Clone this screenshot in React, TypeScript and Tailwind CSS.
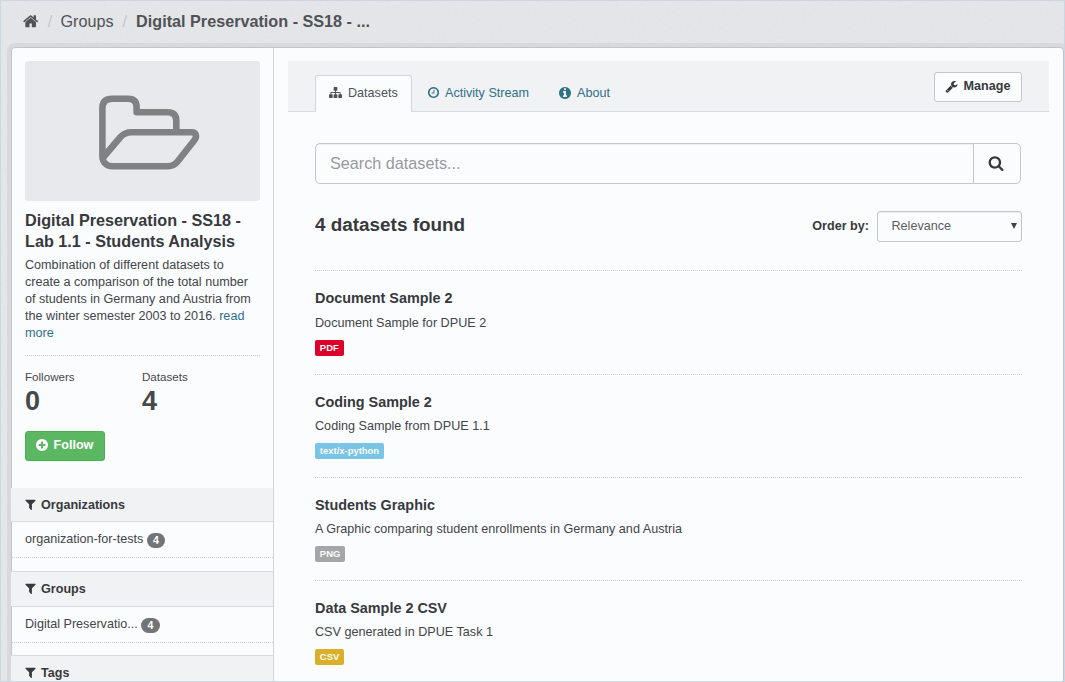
import React from "react";

const disc =
  "M1664 896q0 209-103 385.5t-279.5 279.5-385.5 103-385.5-103-279.5-279.5-103-385.5 103-385.5 279.5-279.5 385.5-103 385.5 103 279.5 279.5 103 385.5z";

const icons = {
  home: "M1408 992v480q0 26-19 45t-45 19h-384v-384h-256v384h-384q-26 0-45-19t-19-45v-480q0-1 .5-3t.5-3l575-474 575 474q1 2 1 6zm223-69l-62 74q-8 9-21 11h-3q-13 0-21-7l-692-577-692 577q-12 8-24 7-13-2-21-11l-62-74q-8-10-7-23.5t11-21.5l719-599q32-26 76-26t76 26l244 204v-195q0-14 9-23t23-9h192q14 0 23 9t9 23v408l219 182q10 8 11 21.5t-7 23.5z",
  search:
    "M1216 832q0-185-131.5-316.5t-316.5-131.5-316.5 131.5-131.5 316.5 131.5 316.5 316.5 131.5 316.5-131.5 131.5-316.5zm512 832q0 52-38 90t-90 38q-54 0-90-38l-343-342q-179 124-399 124-143 0-273.5-55.5t-225-150-150-225-55.5-273.5 55.5-273.5 150-225 225-150 273.5-55.5 273.5 55.5 225 150 150 225 55.5 273.5q0 220-124 399l343 343q37 37 37 90z",
  plus:
    "M1344 960v-128q0-26-19-45t-45-19h-256v-256q0-26-19-45t-45-19h-128q-26 0-45 19t-19 45v256h-256q-26 0-45 19t-19 45v128q0 26 19 45t45 19h256v256q0 26 19 45t45 19h128q26 0 45-19t19-45v-256h256q26 0 45-19t19-45z" + disc,
  filter:
    "M1595 295q17 41-14 70l-493 493v742q0 42-39 59-13 5-25 5-27 0-45-19l-256-256q-19-19-19-45v-486l-493-493q-31-29-14-70 17-39 59-39h1280q42 0 59 39z",
  wrench:
    "M448 1472q0-26-19-45t-45-19-45 19-19 45 19 45 45 19 45-19 19-45zm644-420l-682 682q-37 37-90 37-52 0-91-37l-106-108q-38-36-38-90 0-53 38-91l681-681q39 98 114.5 173.5t173.5 114.5zm634-435q0 39-23 106-47 134-164.5 217.5t-258.5 83.5q-185 0-316.5-131.5t-131.5-316.5 131.5-316.5 316.5-131.5q58 0 121.5 16.5t107.5 46.5q16 11 16 28t-16 28l-293 169v224l193 107q5-3 79-48.5t135.5-81 70.5-35.5q15 0 23.5 10t8.5 25z",
  clock:
    "M1024 544v448q0 14-9 23t-23 9h-320q-14 0-23-9t-9-23v-64q0-14 9-23t23-9h224v-352q0-14 9-23t23-9h64q14 0 23 9t9 23zm416 352q0-148-73-273t-198-198-273-73-273 73-198 198-73 273 73 273 198 198 273 73 273-73 198-198 73-273z" + disc,
  info:
    "M1152 1376v-160q0-14-9-23t-23-9h-96v-512q0-14-9-23t-23-9h-320q-14 0-23 9t-9 23v160q0 14 9 23t23 9h96v320h-96q-14 0-23 9t-9 23v160q0 14 9 23t23 9h448q14 0 23-9t9-23zm-128-896v-160q0-14-9-23t-23-9h-192q-14 0-23 9t-9 23v160q0 14 9 23t23 9h192q14 0 23-9t9-23z" + disc,
  sitemap:
    "M1792 1248v320q0 40-28 68t-68 28h-320q-40 0-68-28t-28-68v-320q0-40 28-68t68-28h96v-192h-512v192h96q40 0 68 28t28 68v320q0 40-28 68t-68 28h-320q-40 0-68-28t-28-68v-320q0-40 28-68t68-28h96v-192h-512v192h96q40 0 68 28t28 68v320q0 40-28 68t-68 28h-320q-40 0-68-28t-28-68v-320q0-40 28-68t68-28h96v-192q0-52 38-90t90-38h512v-192h-96q-40 0-68-28t-28-68v-320q0-40 28-68t68-28h320q40 0 68 28t28 68v320q0 40-28 68t-68 28h-96v192h512q52 0 90 38t38 90v192h96q40 0 68 28t28 68z",
};

function Icon({ name, className }: { name: keyof typeof icons; className: string }) {
  return (
    <svg viewBox="0 0 1792 1792" fill="currentColor" fillRule="evenodd" className={`shrink-0 ${className}`}>
      <path d={icons[name]} />
    </svg>
  );
}

function Facet({ title, className, children }: { title: string; className: string; children?: React.ReactNode }) {
  return (
    <section>
      <h2 className={`-ml-px flex items-center border-b border-[#d8dadd] bg-[#f1f2f4] pl-[12.500px] text-[12.6px] font-bold text-[#37393c] ${className}`}>
        <Icon name="filter" className="mr-[4.500px] mb-[2px] size-[13px]" />
        {title}
      </h2>
      {children}
    </section>
  );
}

function FacetItem({ label, count }: { label: string; count: number }) {
  return (
    <div className="flex h-9 items-center border-b border-dotted border-[#d0d2d5] pl-[13px] text-[12.6px]">
      <span>{label}</span>
      <span className="mt-[2px] ml-[3.5px] flex h-[15px] w-[18.5px] items-center justify-center rounded-full bg-[#737477] text-[10.6px] font-bold text-white">
        {count}
      </span>
    </div>
  );
}

const datasets = [
  { title: "Document Sample 2", text: "Document Sample for DPUE 2", tag: "PDF", color: "bg-[#dd0029]", height: "h-[104px]", gap: "mt-[5px]" },
  { title: "Coding Sample 2", text: "Coding Sample from DPUE 1.1", tag: "text/x-python", color: "bg-[#79c5e8]", height: "h-[103px]", gap: "mt-1" },
  { title: "Students Graphic", text: "A Graphic comparing student enrollments in Germany and Austria", tag: "PNG", color: "bg-[#a5a6a8]", height: "h-[103px]", gap: "mt-1" },
  { title: "Data Sample 2 CSV", text: "CSV generated in DPUE Task 1", tag: "CSV", color: "bg-[#dab02b]", height: "h-[103px]", gap: "mt-1" },
];

function Sidebar() {
  return (
    <aside className="w-[262px] shrink-0 border-r border-[#d3d4d7]">
      <div className="h-[440px] px-[13px] pt-[13px]">
        <div className="flex h-[140px] w-[235px] items-center justify-center rounded-[3px] bg-[#e8e9ec]">
          <svg viewBox="0 0 235 140" className="h-[140px] w-[235px]" fill="none" stroke="#808183" strokeWidth="6.6" strokeLinejoin="round">
            <path d="M77.400 95V47.500q0-9.700 9.700-9.700h16q8.500 0 8.500 8.500v5h31q8.700 0 8.700 8.700v11.300" />
            <path d="M78.500 96l17-20q4.500-4.700 11-4.700h60.500c4 0 5.200 4.200 2.500 7.700l-16.500 21q-4 5.200-10 5.200h-55.900c-5.800 0-9.700-4.200-9.700-10.200" />
          </svg>
        </div>
        <h1 className="mt-[9px] text-[16.200px] leading-[21px] font-bold whitespace-nowrap text-[#37393c]">
          Digital Preservation - SS18 -<br />Lab 1.1 - Students Analysis
        </h1>
        <p className="mt-[5px] text-[12.62px] leading-[17px] whitespace-nowrap">
          Combination of different datasets to<br />create a comparison of the total number<br />of students in Germany and Austria from<br />
          the winter semester 2003 to 2016. <a className="text-[#2f7089]">read<br />more</a>
        </p>
        <dl className="mt-[13px] flex border-t border-dotted border-[#d0d2d5] pt-[12px] text-[#46484b]">
          <div className="w-[117px]">
            <dt className="text-[11.6px] leading-[17px]">Followers</dt>
            <dd className="mt-px text-[27px] leading-[30px] font-bold">0</dd>
          </div>
          <div>
            <dt className="text-[11.6px] leading-[17px]">Datasets</dt>
            <dd className="mt-px text-[27px] leading-[30px] font-bold">4</dd>
          </div>
        </dl>
        <button className="mt-[15px] flex h-[30px] w-20 items-center rounded-[3px] border border-[#4caf55] bg-[#5cb762] pb-px pl-[9px] text-[12.6px] font-bold text-white">
          <Icon name="plus" className="mr-[4.500px] mb-px size-[14px]" />
          Follow
        </button>
      </div>
      <Facet title="Organizations" className="h-[34px] pt-px">
        <FacetItem label="organization-for-tests" count={4} />
      </Facet>
      <div className="h-[13px]" />
      <Facet title="Groups" className="h-9 border-t">
        <FacetItem label="Digital Preservatio..." count={4} />
      </Facet>
      <div className="h-3" />
      <Facet title="Tags" className="h-9 border-t" />
    </aside>
  );
}

function Content() {
  return (
    <main className="min-w-0 flex-1 px-[14px] pt-[13px]">
      <header className="flex h-[51px] justify-between border-b border-[#d8dadd] bg-[#f1f2f4] pr-[27px] pl-[27px] text-[12.6px]">
        <nav className="flex pt-[14px] text-[#2f7089]">
          <a className="flex h-[37px] w-[97px] items-center rounded-t-[3px] border border-b-0 border-[#d3d5d8] bg-[#fbfcfe] pb-[1px] pl-[13px] text-[#505255]">
            <Icon name="sitemap" className="mr-[6px] mb-[2px] size-[13px]" />
            Datasets
          </a>
          <a className="flex h-9 w-[131px] items-center pl-[15px]">
            <Icon name="clock" className="mr-[5px] mb-[2px] size-[13px]" />
            Activity Stream
          </a>
          <a className="flex h-9 items-center pl-[15px]">
            <Icon name="info" className="mr-[5px] mb-px size-[14px]" />
            About
          </a>
        </nav>
        <button className="mt-[11px] flex h-[30px] w-[88px] items-center rounded-[3px] border border-[#c5c6ca] bg-[#fbfcfe] pb-px pl-[10px] text-[12.6px] font-bold text-[#37393c]">
          <Icon name="wrench" className="mr-[5.500px] mb-px size-[13px]" />
          Manage
        </button>
      </header>
      <div className="pr-[27px] pl-[27px]">
        <form className="mt-[31px] mr-px flex h-[41px] rounded-[5px] border border-[#c5c6ca]">
          <div className="flex flex-1 items-center pl-[14px] text-[16.200px] text-[#98999c] shadow-[inset_0_1px_1px_rgba(0,0,0,0.06)]">Search datasets...</div>
          <div className="flex w-[47px] items-center justify-center border-l border-[#c5c6ca] pr-[3px] pb-px text-[#37393c]">
            <Icon name="search" className="size-[16px]" />
          </div>
        </form>
        <div className="mt-[27px] flex h-[31px] items-center justify-between">
          <h1 className="pb-[2px] text-[18.900px] font-bold text-[#37393c]">4 datasets found</h1>
          <div className="flex items-center text-[12.6px]">
            <label className="font-bold text-[#37393c]">Order by:</label>
            <div className="ml-2 flex h-[31px] w-[145px] items-center justify-between rounded-[3px] border border-[#c5c6ca] pr-1 pl-[13.500px] text-[#5b5d60] shadow-[inset_0_1px_1px_rgba(0,0,0,0.06)]">
              Relevance
              <svg viewBox="0 0 6 6" className="mb-px h-[6px] w-[6px]" fill="#404244"><path d="M0 0h6L3 6z" /></svg>
            </div>
          </div>
        </div>
        <ul className="mt-7">
          {datasets.map((d) => (
            <li key={d.title} className={`border-t border-dotted border-[#d0d2d5] pt-[17px] ${d.height}`}>
              <h3 className="text-[14.400px] leading-[21px] font-bold text-[#37393c]">{d.title}</h3>
              <p className={`${d.gap} text-[12.63px] leading-[18px]`}>{d.text}</p>
              <div className="mt-2 flex">
                <span className={`flex h-4 items-center rounded-[2px] px-[4.850px] text-[9.45px] font-bold text-[#fafbfd] ${d.color}`}>{d.tag}</span>
              </div>
            </li>
          ))}
        </ul>
      </div>
    </main>
  );
}

export default function App() {
  return (
    <div className="relative h-[682px] w-[1065px] overflow-hidden border border-[#ccd7e5] bg-[#e5e7ea] font-['Liberation_Sans',sans-serif] text-[#434548]">
      <svg className="absolute inset-0 h-full w-full opacity-[0.07]" aria-hidden="true">
        <filter id="grain">
          <feTurbulence type="fractalNoise" baseFrequency="0.5" numOctaves="2" seed="4" />
          <feColorMatrix type="saturate" values="0" />
        </filter>
        <rect width="100%" height="100%" filter="url(#grain)" />
      </svg>
      <div className="relative flex h-full flex-col">
        <nav className="flex h-[46px] shrink-0 items-center pb-[6px] pl-[22px] text-[16.200px] text-[#505255]">
          <Icon name="home" className="size-[16.500px]" />
          <span className="w-[21px] text-center text-[#c5c7ca]">/</span>
          <span>Groups</span>
          <span className="w-[22.500px] text-center text-[#c5c7ca]">/</span>
          <span className="font-bold">Digital Preservation - SS18 - ...</span>
        </nav>
        <div className="ml-[10px] flex h-[640px] w-[1053px] shrink-0 rounded-[4px] border border-[#c3c4c8] bg-[#fbfcfe] shadow-[0_0_0_4px_rgba(0,0,0,0.05)]">
          <Sidebar />
          <Content />
        </div>
      </div>
    </div>
  );
}
